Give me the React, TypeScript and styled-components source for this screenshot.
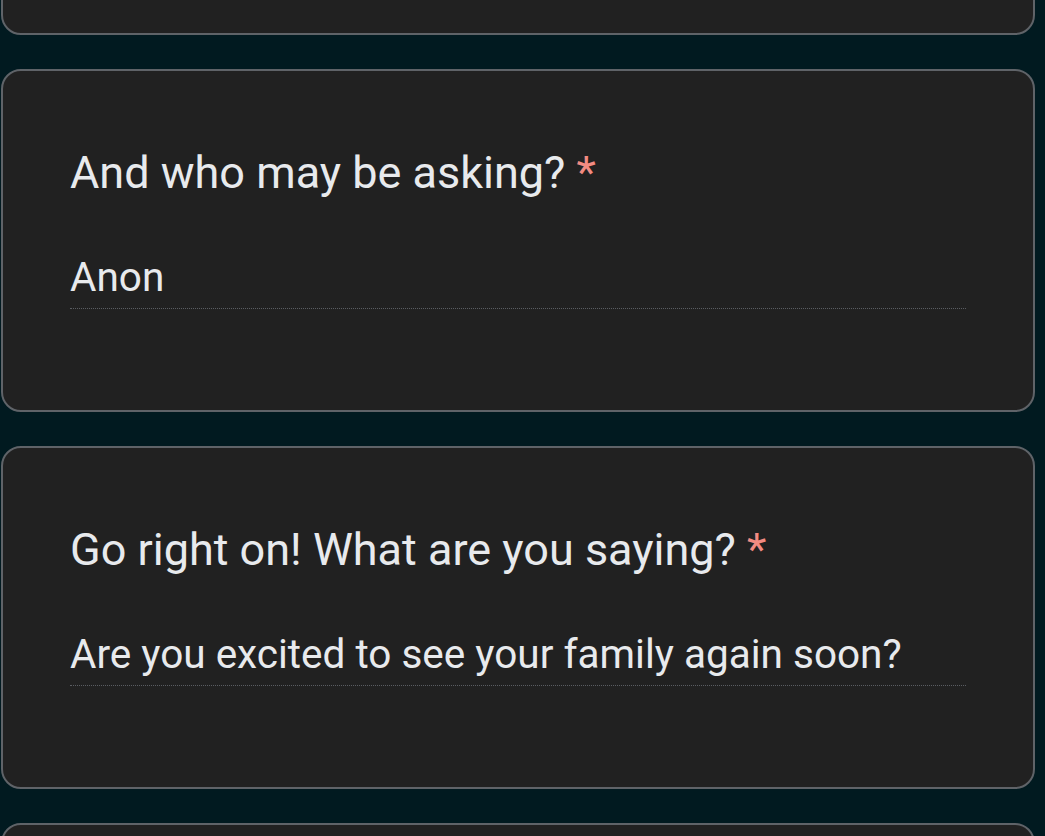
import styled, { createGlobalStyle } from "styled-components";

const GlobalStyle = createGlobalStyle`
  html, body {
    margin: 0;
    padding: 0;
    background: #011a20;
    overflow: hidden;
  }
  body {
    font-family: Roboto, "Noto Sans", Arial, sans-serif;
    -webkit-font-smoothing: antialiased;
  }
`;

const Page = styled.div`
  height: 836px;
  overflow: hidden;
`;

const CardList = styled.div`
  display: flex;
  flex-direction: column;
  gap: 34px;
  padding: 0 10px 0 1px;
  margin-top: -308px;
`;

const Card = styled.div`
  box-sizing: border-box;
  height: 343px;
  background: #212121;
  border: 2px solid #5f6368;
  border-radius: 20px;
  padding: 74px 67px 0 67px;
  display: flex;
  flex-direction: column;
`;

const Question = styled.div`
  font-size: 45px;
  line-height: 56px;
  color: #e8eaed;
  white-space: nowrap;
`;

const Required = styled.span`
  color: #f28b82;
`;

const Answer = styled.div`
  margin-top: 52px;
  font-size: 40.5px;
  line-height: 48px;
  color: #e8eaed;
  padding-bottom: 7px;
  border-bottom: 1px dotted #5a5d62;
  white-space: nowrap;
`;

interface Item {
  question: string;
  answer: string;
}

const items: Item[] = [
  { question: "What's on your mind?", answer: "Hello" },
  { question: "And who may be asking?", answer: "Anon" },
  {
    question: "Go right on! What are you saying?",
    answer: "Are you excited to see your family again soon?",
  },
  { question: "Anything else?", answer: "" },
];

function App() {
  return (
    <Page>
      <GlobalStyle />
      <CardList>
        {items.map((item) => (
          <Card key={item.question}>
            <Question>
              {item.question} <Required>*</Required>
            </Question>
            <Answer>{item.answer || "\u00a0"}</Answer>
          </Card>
        ))}
      </CardList>
    </Page>
  );
}

export default App;
